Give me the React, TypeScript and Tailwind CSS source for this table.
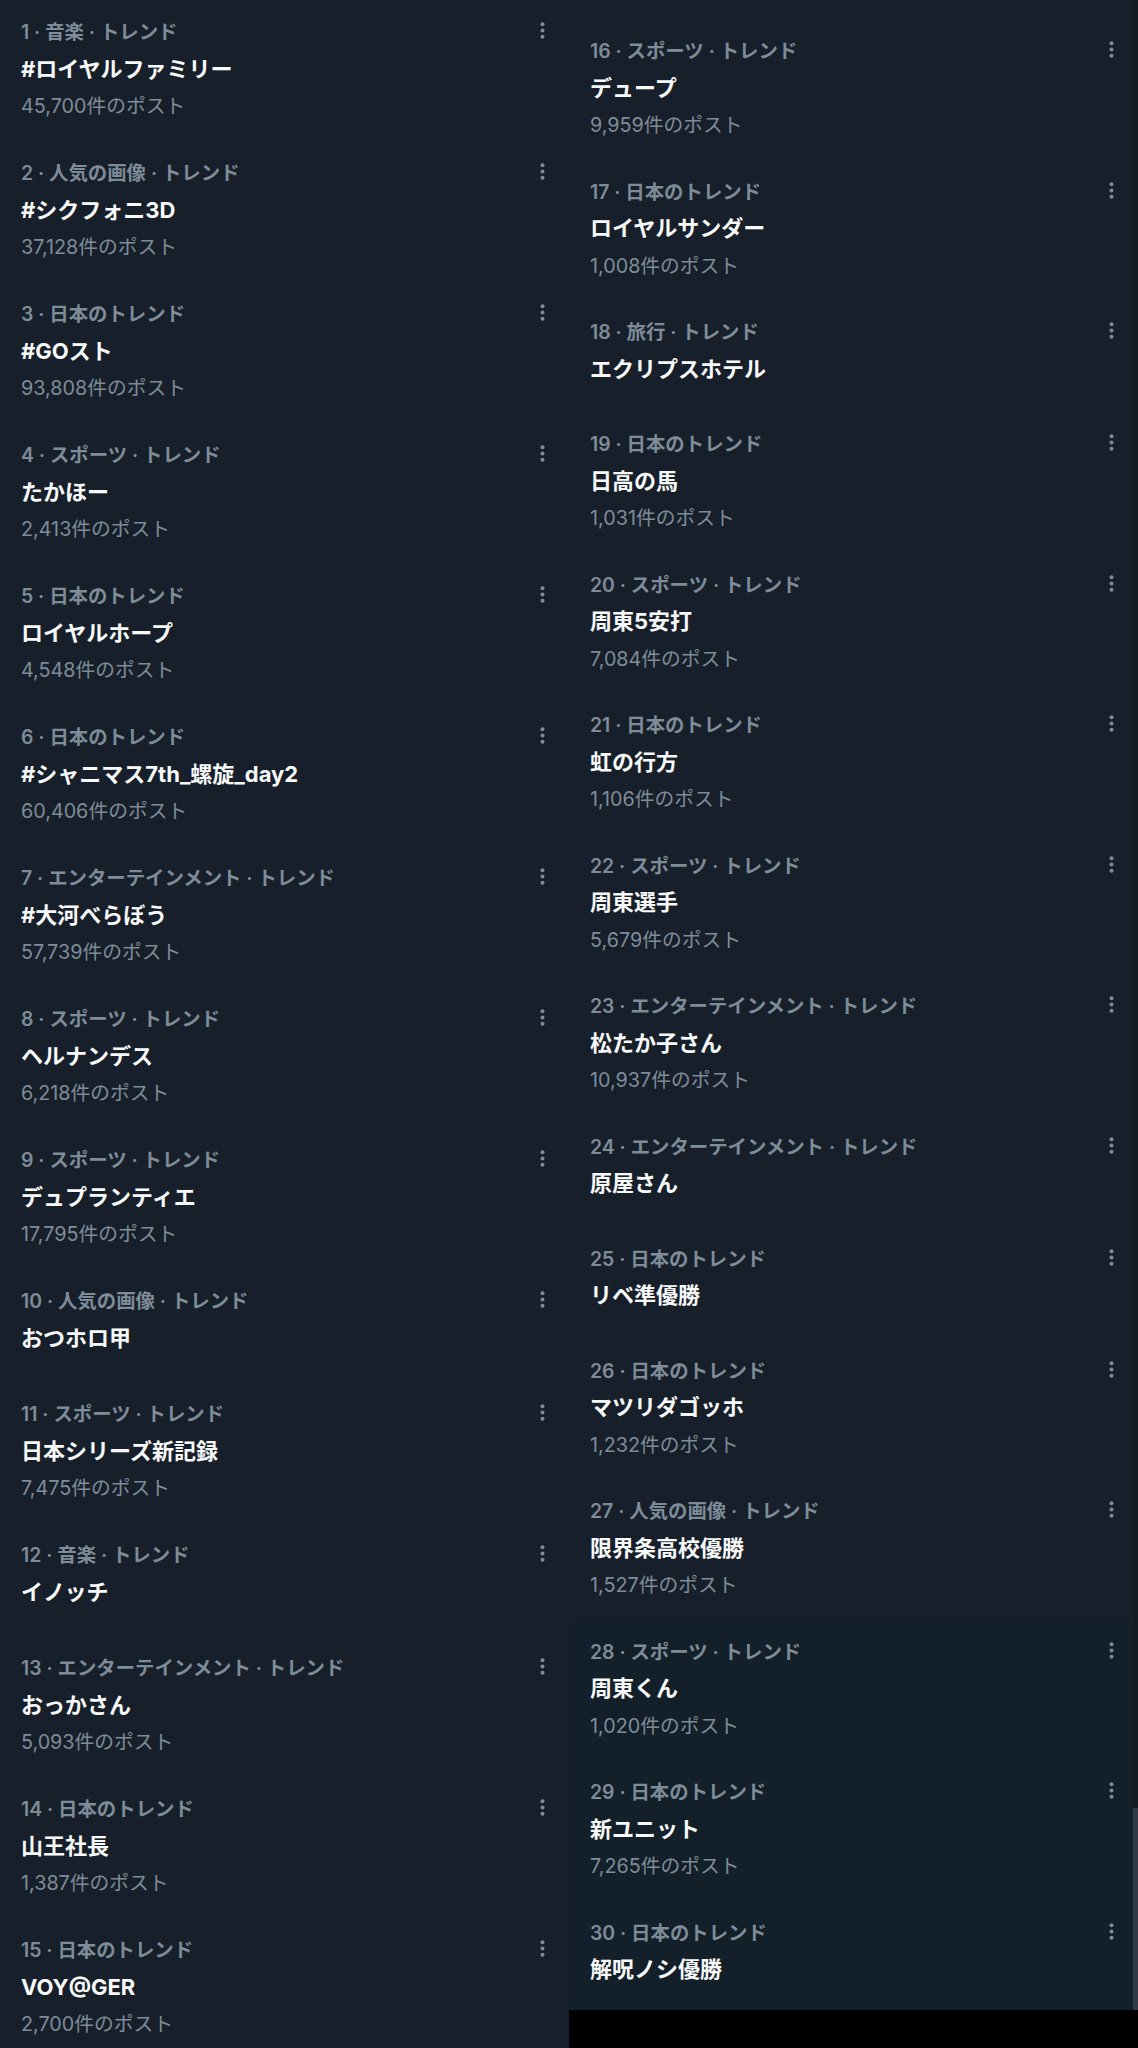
import React from 'react';

type Trend = { rank: number; cat: string; title: string; count?: string };

const left: Trend[] = [
  { rank: 1, cat: '音楽 · トレンド', title: '#ロイヤルファミリー', count: '45,700' },
  { rank: 2, cat: '人気の画像 · トレンド', title: '#シクフォニ3D', count: '37,128' },
  { rank: 3, cat: '日本のトレンド', title: '#GOスト', count: '93,808' },
  { rank: 4, cat: 'スポーツ · トレンド', title: 'たかほー', count: '2,413' },
  { rank: 5, cat: '日本のトレンド', title: 'ロイヤルホープ', count: '4,548' },
  { rank: 6, cat: '日本のトレンド', title: '#シャニマス7th_螺旋_day2', count: '60,406' },
  { rank: 7, cat: 'エンターテインメント · トレンド', title: '#大河べらぼう', count: '57,739' },
  { rank: 8, cat: 'スポーツ · トレンド', title: 'ヘルナンデス', count: '6,218' },
  { rank: 9, cat: 'スポーツ · トレンド', title: 'デュプランティエ', count: '17,795' },
  { rank: 10, cat: '人気の画像 · トレンド', title: 'おつホロ甲' },
  { rank: 11, cat: 'スポーツ · トレンド', title: '日本シリーズ新記録', count: '7,475' },
  { rank: 12, cat: '音楽 · トレンド', title: 'イノッチ' },
  { rank: 13, cat: 'エンターテインメント · トレンド', title: 'おっかさん', count: '5,093' },
  { rank: 14, cat: '日本のトレンド', title: '山王社長', count: '1,387' },
  { rank: 15, cat: '日本のトレンド', title: 'VOY@GER', count: '2,700' },
];

const right: Trend[] = [
  { rank: 16, cat: 'スポーツ · トレンド', title: 'デュープ', count: '9,959' },
  { rank: 17, cat: '日本のトレンド', title: 'ロイヤルサンダー', count: '1,008' },
  { rank: 18, cat: '旅行 · トレンド', title: 'エクリプスホテル' },
  { rank: 19, cat: '日本のトレンド', title: '日高の馬', count: '1,031' },
  { rank: 20, cat: 'スポーツ · トレンド', title: '周東5安打', count: '7,084' },
  { rank: 21, cat: '日本のトレンド', title: '虹の行方', count: '1,106' },
  { rank: 22, cat: 'スポーツ · トレンド', title: '周東選手', count: '5,679' },
  { rank: 23, cat: 'エンターテインメント · トレンド', title: '松たか子さん', count: '10,937' },
  { rank: 24, cat: 'エンターテインメント · トレンド', title: '原屋さん' },
  { rank: 25, cat: '日本のトレンド', title: 'リベ準優勝' },
  { rank: 26, cat: '日本のトレンド', title: 'マツリダゴッホ', count: '1,232' },
  { rank: 27, cat: '人気の画像 · トレンド', title: '限界条高校優勝', count: '1,527' },
];

const rightLower: Trend[] = [
  { rank: 28, cat: 'スポーツ · トレンド', title: '周東くん', count: '1,020' },
  { rank: 29, cat: '日本のトレンド', title: '新ユニット', count: '7,265' },
  { rank: 30, cat: '日本のトレンド', title: '解呪ノシ優勝' },
];

function MoreDots() {
  return (
    <svg width="5" height="17" viewBox="0 0 5 17" className="block">
      <circle cx="2.5" cy="2.2" r="2" fill="#7e8c99" />
      <circle cx="2.5" cy="8.5" r="2" fill="#7e8c99" />
      <circle cx="2.5" cy="14.8" r="2" fill="#7e8c99" />
    </svg>
  );
}

function TrendRow({ t, side }: { t: Trend; side: 'left' | 'right' }) {
  let pad = '';
  if (side === 'left') {
    pad = t.count ? 'pl-[21px] pr-[24px] pt-[20px] pb-[26px]' : 'pl-[21px] pr-[24px] pt-[20px] pb-[28.5px]';
  } else {
    pad = t.count ? 'pl-[21px] pr-[19px] pt-[20px] pb-[25.5px]' : 'pl-[21px] pr-[19px] pt-[20px] pb-[27.5px]';
  }
  return (
    <div className={`flex items-start ${pad}`}>
      <div className="flex-1 min-w-0">
        <div className="text-[19.4px] leading-[24px] font-semibold text-[#7e8c99] whitespace-nowrap">
          {t.rank} · {t.cat}
        </div>
        <div className="mt-[8.5px] text-[22px] leading-[32px] font-bold text-[#f7f9f9] whitespace-nowrap">
          {t.title}
        </div>
        {t.count && (
          <div className="mt-[12.5px] text-[19.75px] leading-[18px] text-[#7e8c99] whitespace-nowrap">
            {t.count}件のポスト
          </div>
        )}
      </div>
      <div className="mt-[2px]">
        <MoreDots />
      </div>
    </div>
  );
}

export default function App() {
  return (
    <div
      className="w-[1138px] h-[2048px] overflow-hidden bg-black flex items-start"
      style={{ fontFamily: 'Inter, "Noto Sans CJK JP", "Noto Sans", sans-serif' }}
    >
      {/* left list */}
      <div className="w-[569px] h-[2048px] bg-[#17202a]">
        {left.map((t) => (
          <TrendRow key={t.rank} t={t} side="left" />
        ))}
      </div>

      {/* right list + scrollbar */}
      <div className="w-[569px] flex">
        <div className="w-[564px]">
          <div className="bg-[#17202a] pt-[19px]">
            {right.map((t) => (
              <TrendRow key={t.rank} t={t} side="right" />
            ))}
          </div>
          <div className="bg-[#142029] h-[390px] overflow-hidden">
            {rightLower.map((t) => (
              <TrendRow key={t.rank} t={t} side="right" />
            ))}
          </div>
        </div>
        <div className="w-[5px] bg-[#121b24] flex flex-col justify-end">
          <div className="h-[202px] bg-[#2f3a45]" />
        </div>
      </div>
    </div>
  );
}
